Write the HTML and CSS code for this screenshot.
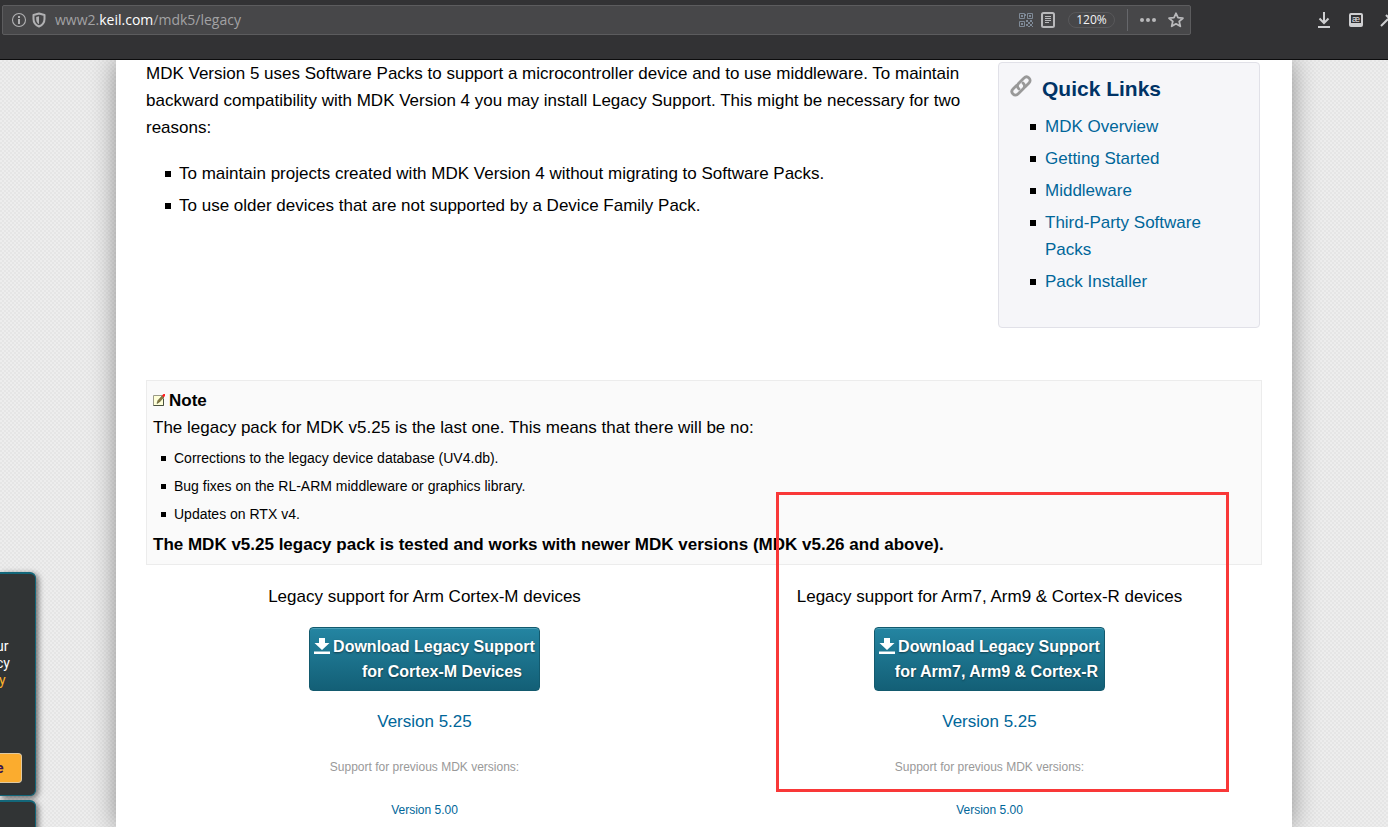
FILE: index.html
```html
<!DOCTYPE html>
<html lang="en">
<head>
<meta charset="utf-8">
<title>MDK v4 Legacy Support</title>
<link rel="stylesheet" href="styles.css">
</head>
<body>
<header class="toolbar">
  <div class="urlbar">
    <div class="identity">
      <button class="icon-btn" aria-label="Site information"><svg width="16" height="16" viewBox="0 0 16 16"><circle cx="8" cy="8" r="6.5" fill="none" stroke="#b1b1b3" stroke-width="1.1"/><path d="M7 4h2v2H7zM7 7h2v5H7z" fill="#b1b1b3"/></svg></button>
      <button class="icon-btn" aria-label="Tracking protection"><svg width="16" height="16" viewBox="0 0 16 16"><path d="M8 1.500 2.500 3v4c0 3.600 2.400 6.200 5.500 7.500 3.100-1.300 5.500-3.900 5.500-7.500V3z" fill="none" stroke="#b1b1b3" stroke-width="2" stroke-linejoin="round"/><path d="M8 4.200v8C6 10.900 5.200 9.300 5.200 7V5z" fill="#b1b1b3"/></svg></button>
    </div>
    <span class="url">www2.<b>keil.com</b>/mdk5/legacy</span>
    <button class="icon-btn" aria-label="QR code"><svg width="16" height="16" viewBox="0 0 16 16"><g fill="none" stroke="#7f8a97"><path d="M1.500 1.500h5v5h-5zM9.500 1.500h5v5h-5zM1.500 9.500h5v5h-5z"/></g><path d="M3 3h2v2H3zM11 3h2v2h-2zM3 11h2v2H3zM8 8h2v2H8zM12 8h2v2h-2zM10 10h2v2h-2zM14 10h1v2h-1zM8 12h2v2H8zM12 12h2v2h-2zM10 14h2v1h-2zM14 14h1v1h-1zM7 2h1v2H7z" fill="#7f8a97"/></svg></button>
    <button class="icon-btn" aria-label="Reader view"><svg width="16" height="16" viewBox="0 0 16 16"><rect x="2" y="1" width="12" height="14" rx="1.500" fill="none" stroke="#b9b9bb" stroke-width="2"/><path d="M5 4.500h6M5 6.500h6M5 8.500h6M5 10.500h4" stroke="#b9b9bb"/></svg></button>
    <button class="zoom">120%</button>
    <span class="divider"></span>
    <button class="icon-btn" aria-label="Page actions"><svg width="18" height="16" viewBox="0 0 18 16" fill="#b9b9bb"><circle cx="3" cy="8" r="2"/><circle cx="9" cy="8" r="2"/><circle cx="15" cy="8" r="2"/></svg></button>
    <button class="icon-btn" aria-label="Bookmark"><svg width="16" height="16" viewBox="0 0 16 16"><path d="m8 1.300 2 4.400 4.900.5-3.700 3.200 1.100 4.900L8 11.800l-4.300 2.500 1.100-4.900L1.100 6.200 6 5.700z" fill="none" stroke="#b9b9bb" stroke-width="1.800" stroke-linejoin="round"/></svg></button>
  </div>
  <div class="tools">
    <button class="icon-btn" aria-label="Downloads"><svg width="16" height="18" viewBox="0 0 16 18"><path d="M8 1v11M3.500 7.500 8 12l4.500-4.500M2 16h12" fill="none" stroke="#cfcfd1" stroke-width="2"/></svg></button>
    <button class="icon-btn dict" aria-label="Dictionary">æ</button>
    <button class="icon-btn" aria-label="Developer tools"><svg width="16" height="16" viewBox="0 0 16 16"><path d="M1 14 8 7M6 3l7 7" stroke="#cfcfd1" stroke-width="2"/></svg></button>
  </div>
</header>
<main class="backdrop">
  <article class="page">
    <div class="top">
      <section class="intro">
        <p>MDK Version 5 uses Software Packs to support a microcontroller device and to use middleware. To maintain backward compatibility with MDK Version 4 you may install Legacy Support. This might be necessary for two reasons:</p>
        <ul class="list">
          <li>To maintain projects created with MDK Version 4 without migrating to Software Packs.</li>
          <li>To use older devices that are not supported by a Device Family Pack.</li>
        </ul>
      </section>
      <aside class="quick">
        <h2><svg width="22" height="22" viewBox="0 0 22 22" fill="none" stroke="#999" stroke-width="2.800" stroke-linecap="round"><path d="M9 14C7 12 7 10 8.500 8.500L14 3c1.500-1.500 3.500-1.500 5 0s1.500 3.500 0 5l-4 4"/><path d="M13 8c2 2 2 4 .500 5.500L8 19c-1.500 1.500-3.500 1.500-5 0s-1.500-3.500 0-5l3.500-3.500"/></svg>Quick Links</h2>
        <ul class="list">
          <li><a href="#">MDK Overview</a></li>
          <li><a href="#">Getting Started</a></li>
          <li><a href="#">Middleware</a></li>
          <li><a href="#">Third-Party Software Packs</a></li>
          <li><a href="#">Pack Installer</a></li>
        </ul>
      </aside>
    </div>
    <section class="note">
      <h3><svg width="12" height="13" viewBox="0 0 12 13"><path d="M.5 1.500h10v10H.5z" fill="#ffffd8" stroke="#9a9a88"/><path d="M.5 11.500h10V5" fill="none" stroke="#4a5240"/><path d="M4 9.500 5 6.500 9 2l1.500 1.500L6.500 8z" fill="#8a7a3c" stroke="#4b5034" stroke-width=".6"/><path d="M9 1.500 10.500 0 12 0v2l-1.500 1.500z" fill="#f22"/></svg>Note</h3>
      <p>The legacy pack for MDK v5.25 is the last one. This means that there will be no:</p>
      <ul class="list list-small">
        <li>Corrections to the legacy device database (UV4.db).</li>
        <li>Bug fixes on the RL-ARM middleware or graphics library.</li>
        <li>Updates on RTX v4.</li>
      </ul>
      <p><strong>The MDK v5.25 legacy pack is tested and works with newer MDK versions (MDK v5.26 and above).</strong></p>
    </section>
    <div class="downloads">
      <section class="download">
        <p>Legacy support for Arm Cortex-M devices</p>
        <a class="button" href="#"><span class="line"><svg width="16" height="17" viewBox="0 0 16 17" fill="#fff"><path d="M5 0h6v5h4.500L8 12 .5 5H5zM0 13.500h16v2.500H0z"/></svg>Download Legacy Support</span><span class="line line-cm">for Cortex-M Devices</span></a>
        <a class="version" href="#">Version 5.25</a>
        <p class="previous">Support for previous MDK versions:</p>
        <a class="old" href="#">Version 5.00</a>
      </section>
      <section class="download">
        <p>Legacy support for Arm7, Arm9 &amp; Cortex-R devices</p>
        <a class="button" href="#"><span class="line"><svg width="16" height="17" viewBox="0 0 16 17" fill="#fff"><path d="M5 0h6v5h4.500L8 12 .5 5H5zM0 13.500h16v2.500H0z"/></svg>Download Legacy Support</span><span class="line line-arm">for Arm7, Arm9 &amp; Cortex-R</span></a>
        <a class="version" href="#">Version 5.25</a>
        <p class="previous">Support for previous MDK versions:</p>
        <a class="old" href="#">Version 5.00</a>
      </section>
    </div>
  </article>
  <div class="drawer">
    <section class="card">
      <p>ur<br>cy<br><a href="#">y</a></p>
      <button class="close">e</button>
    </section>
    <section class="card"></section>
  </div>
  <div class="marker"></div>
</main>
</body>
</html>
```
FILE: styles.css
```css
* { box-sizing: border-box; }
body {
  margin: 0;
  height: 100vh;
  overflow: hidden;
  display: flex;
  flex-direction: column;
  font: 17px/27px "Liberation Sans", Arial, sans-serif;
  color: #000;
}
p, h2, h3, ul { margin: 0; padding: 0; }
a { color: #069; text-decoration: none; }
button { font: inherit; border: 0; padding: 0; background: none; color: inherit; }

.toolbar {
  flex: none;
  height: 60px;
  display: flex;
  align-items: flex-start;
  padding: 5px 0 0 2px;
  background: #323234;
  border-bottom: 1px solid #0c0c0d;
}
.urlbar {
  flex: 1;
  height: 30px;
  display: flex;
  align-items: center;
  padding: 0 5px 0 8px;
  gap: 4px;
  background: #474749;
  border: 1px solid #5c5c5e;
  border-radius: 2px;
}
.identity { display: flex; gap: 4px; }
.url {
  flex: 1;
  padding-left: 4px;
  font: 14px/20px "Open Sans", "Noto Sans", sans-serif;
  color: #a2a2a4;
}
.url b { font-weight: 400; color: #fff; }
.icon-btn { display: flex; align-items: center; justify-content: center; flex: none; }
.urlbar > .icon-btn { min-width: 18px; }
.zoom {
  width: 47px;
  height: 16px;
  margin: 0 8px 0 7px;
  border: 1px solid #58585a;
  border-radius: 8px;
  font: 12px/14px "Open Sans", sans-serif;
  color: #f4f4f5;
}
.divider { width: 1px; height: 22px; background: #66676b; margin-right: 7px; }
.urlbar .divider + .icon-btn { margin-right: 6px; }
.tools {
  flex: none;
  width: 197px;
  height: 30px;
  padding-left: 125px;
  display: flex;
  align-items: center;
  gap: 17px;
  overflow: hidden;
}
.dict {
  width: 14px;
  height: 14px;
  border: 2px solid #cfcfd1;
  border-bottom-width: 4px;
  border-radius: 2px;
  font: 9px/8px "Liberation Sans", sans-serif;
  color: #e4e4e5;
}

.backdrop {
  flex: 1;
  min-height: 0;
  position: relative;
  overflow: hidden;
  padding: 0 96px 0 116px;
  background: conic-gradient(#e5e5e5 25%, #ededed 0 50%, #e5e5e5 0 75%, #ededed 0) 0 0 / 4px 4px;
}
.page {
  min-height: 100%;
  background: #fff;
  box-shadow: 0 0 24px rgba(0, 0, 0, .4);
}
.top {
  display: flex;
  justify-content: space-between;
  padding: 0 32px 0 30px;
}
.intro { width: 820px; }
.list { list-style: none; padding-left: 19px; margin-top: 19px; }
.list li {
  position: relative;
  padding-left: 14px;
  margin-bottom: 5px;
}
.list li::before {
  content: "";
  position: absolute;
  left: 0;
  top: 11px;
  width: 6px;
  height: 6px;
  background: #000;
}
.quick {
  width: 262px;
  height: 266px;
  margin-top: 2px;
  padding: 10px 11px;
  background: #f6f6f9;
  border: 1px solid #e1e1e8;
  border-radius: 4px;
}
.quick h2 {
  display: flex;
  align-items: flex-start;
  gap: 10px;
  padding-top: 2px;
  font-size: 21px;
  line-height: 28px;
  color: #036;
}
.quick .list { margin-top: 10px; padding-left: 20px; }
.quick .list li { padding-left: 15px; }

.note {
  margin: 52px 30px 0;
  padding: 6px;
  background: #fafafa;
  border: 1px solid #ececec;
}
.note h3 { display: flex; align-items: center; gap: 4px; font-size: 17px; line-height: 27px; }
.list-small { margin: 3px 0; padding-left: 8px; font-size: 14px; line-height: 28px; }
.list-small li { margin: 0; padding-left: 13px; }
.list-small li::before { top: 12px; width: 5px; height: 5px; }

.downloads {
  display: grid;
  grid-template-columns: 1fr 1fr;
  padding: 18px 20px 0 26px;
}
.download {
  display: flex;
  flex-direction: column;
  align-items: center;
}
.button {
  margin: 17px 0;
  padding: 6px 4px;
  display: flex;
  flex-direction: column;
  align-items: center;
  border: 1px solid #135a6e;
  border-radius: 4px;
  background: linear-gradient(#2485a2, #135f76);
  box-shadow: inset 0 1px 0 #4ba0b8;
  color: #fff;
  font-weight: 700;
  font-size: 16px;
  line-height: 25px;
  text-shadow: 0 1px 2px rgba(0, 0, 0, .5);
}
.line { display: flex; align-items: center; gap: 3px; }
.line-cm { padding-left: 35px; }
.line-arm { padding-left: 14px; }
.previous { margin: 19px 0 16px; font-size: 12px; color: #999; }
.old { font-size: 12px; }

.drawer { position: absolute; left: 0; top: 512px; width: 36px; }
.card {
  height: 224px;
  margin-bottom: 4px;
  padding: 64px 13px 0 0;
  background: #313435;
  border: 1px solid #13677a;
  border-top-width: 2px;
  border-left: 0;
  border-radius: 0 6px 6px 0;
  box-shadow: 2px 2px 6px rgba(0, 0, 0, .6);
  font: 14px/17px Roboto, sans-serif;
  color: #fff;
}
.card p { margin-left: -4px; }
.card a { padding-left: 3px; color: #fdb32b; }
.card .close {
  width: 26px;
  height: 30px;
  margin: 64px 0 0 -4px;
  padding-right: 18px;
  background: #fbac2e;
  border: 1px solid #dfc9a2;
  border-left: 0;
  border-radius: 0 4px 4px 0;
  font-weight: 700;
  color: #3c1450;
}
.marker {
  position: absolute;
  left: 776px;
  top: 432px;
  width: 453px;
  height: 300px;
  border: 3px solid #f93838;
  pointer-events: none;
}
```
